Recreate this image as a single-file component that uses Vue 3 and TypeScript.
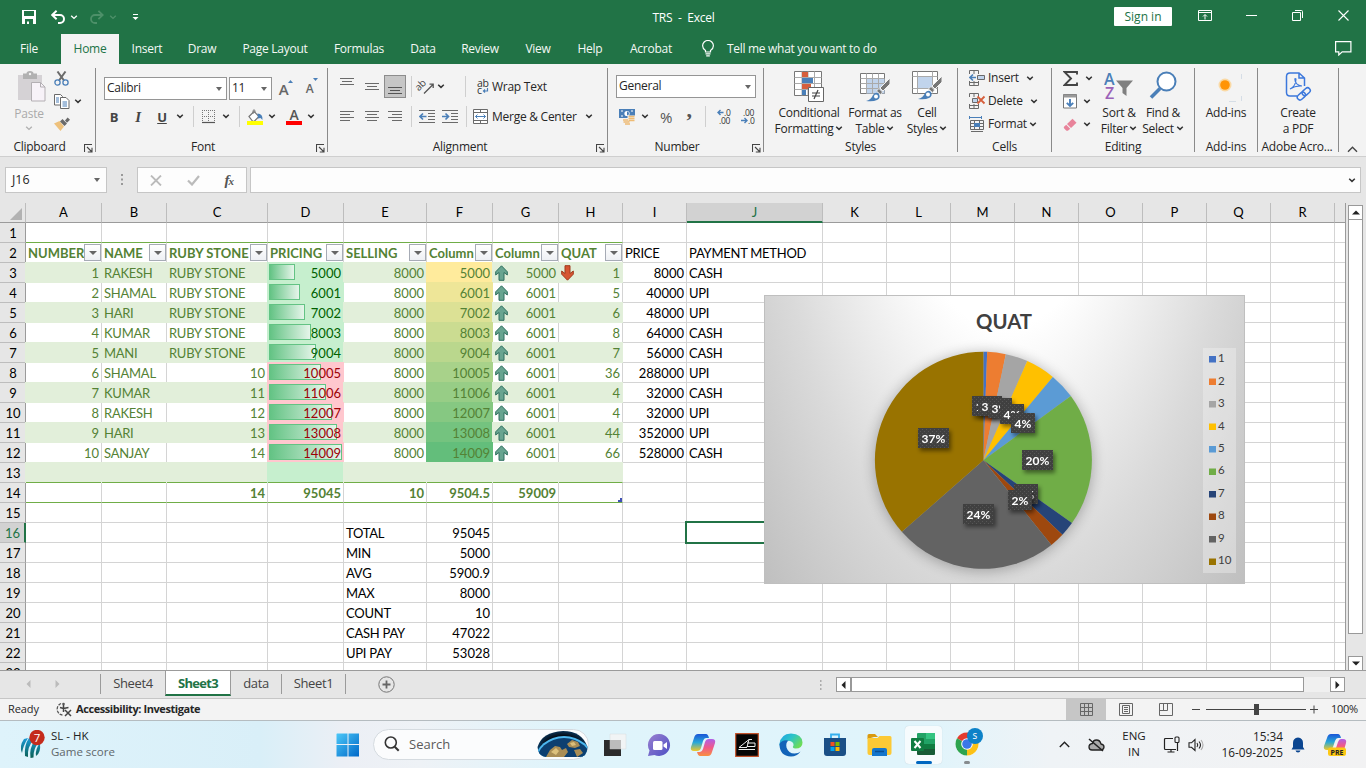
<script setup lang="ts">
import { h } from 'vue'

const Chev = () =>
  h('svg', { width: 8, height: 5, viewBox: '0 0 8 5' }, [
    h('path', { d: 'M1.2 .8 4 3.4 6.8 .8', fill: 'none', stroke: '#333', 'stroke-width': 1.5 }),
  ])
const Launch = () =>
  h('svg', { width: 9, height: 9, viewBox: '0 0 9 9' }, [
    h('path', { d: 'M.5 8V.5H8M3 3l4.5 4.5M8 3.8V8H3.8', fill: 'none', stroke: '#444', 'stroke-width': 1.1 }),
  ])

const tabs = ['File', 'Home', 'Insert', 'Draw', 'Page Layout', 'Formulas', 'Data', 'Review', 'View', 'Help', 'Acrobat']
const letters = 'ABCDEFGHIJKLMNOPQR'.split('').concat('')

interface Cell {
  t?: string
  cls: string[]
  bar?: number
  icon?: 'up' | 'down'
  filter?: boolean
  bg?: string
}

const names = ['RAKESH', 'SHAMAL', 'HARI', 'KUMAR', 'MANI', 'SHAMAL', 'KUMAR', 'RAKESH', 'HARI', 'SANJAY']
const pricing = [5000, 6001, 7002, 8003, 9004, 10005, 11006, 12007, 13008, 14009]
const quat = [1, 5, 6, 8, 7, 36, 4, 4, 44, 66]
const price = [8000, 40000, 48000, 64000, 56000, 288000, 32000, 32000, 352000, 528000]
const pay = ['CASH', 'UPI', 'UPI', 'CASH', 'CASH', 'UPI', 'CASH', 'UPI', 'UPI', 'CASH']
const heads = ['NUMBER', 'NAME', 'RUBY STONE', 'PRICING', 'SELLING', 'Column', 'Column', 'QUAT', 'PRICE', 'PAYMENT METHOD']
const totals = ['', '', '14', '95045', '10', '9504.5', '59009', '']
const summary = [['TOTAL', '95045'], ['MIN', '5000'], ['AVG', '5900.9'], ['MAX', '8000'], ['COUNT', '10'], ['CASH PAY', '47022'], ['UPI PAY', '53028']]

function scale(t: number): string {
  const a = [255, 235, 156]
  const b = [99, 190, 123]
  return `rgb(${a.map((v, i) => Math.round(v + (b[i] - v) * t)).join(',')})`
}

function makeCell(r: number, c: number): Cell {
  const cell: Cell = { cls: [] }
  const inTable = c < 8
  if (inTable && (r === 1 || r === 2 || r === 13 || r === 14)) cell.cls.push('gline')
  if (inTable && r >= 3 && r <= 12) cell.cls.push('noline')
  if (r === 2 && c < 10) {
    cell.t = heads[c]
    if (inTable) {
      cell.cls.push('head')
      cell.filter = true
    }
  }
  if (r >= 3 && r <= 13 && inTable) {
    cell.cls.push('body')
    if (r % 2 === 1) cell.bg = '#e2efda'
    if (c === 3) cell.bg = r >= 8 && r <= 12 ? '#ffc7ce' : '#c6efce'
  }
  if (r >= 3 && r <= 12) {
    const i = r - 3
    if (c === 5) cell.bg = scale(i / 9)
    if (c === 3) {
      cell.bar = Math.round((73 * pricing[i]) / 14009)
      cell.cls.push(i < 5 ? 'good' : 'bad')
    }
    if (c === 6) cell.icon = 'up'
    if (c === 7 && i === 0) cell.icon = 'down'
    const vals = [String(i + 1), names[i], i < 5 ? 'RUBY STONE' : String(i + 5), String(pricing[i]), '8000', String(pricing[i]), i ? '6001' : '5000', String(quat[i]), String(price[i]), pay[i]]
    if (c < 10) cell.t = vals[c]
    if (c < 10 && c !== 1 && c !== 9 && !(c === 2 && i < 5)) cell.cls.push('num')
  }
  if (r === 14 && inTable) {
    cell.t = totals[c]
    cell.cls.push('num', 'head')
  }
  if (r >= 16 && r <= 22) {
    if (c === 4) cell.t = summary[r - 16][0]
    if (c === 5) {
      cell.t = summary[r - 16][1]
      cell.cls.push('num')
    }
  }
  if (cell.bg) cell.cls.push('fill')
  return cell
}

const rows = Array.from({ length: 23 }, (_, i) => ({
  n: i + 1,
  cells: Array.from({ length: 19 }, (_, c) => makeCell(i + 1, c)),
}))

const pieColors = ['#4472c4', '#ed7d31', '#a5a5a5', '#ffc000', '#5b9bd5', '#70ad47', '#264478', '#9e480e', '#636363', '#997300']
const total = quat.reduce((a, b) => a + b, 0)
let acc = 0
const slices = quat.map((v, i) => {
  const pt = (f: number) => {
    const a = f * Math.PI * 2
    return `${(219.4 + 108.5 * Math.sin(a)).toFixed(2)} ${(165.3 - 108.5 * Math.cos(a)).toFixed(2)}`
  }
  const s = acc / total
  acc += v
  const e = acc / total
  return { d: `M219.4 165.3L${pt(s)}A108.5 108.5 0 0 1 ${pt(e)}Z`, fill: pieColors[i] }
})
const pieLabels = [
  { x: 208, y: 101, w: 24, t: '1%' },
  { x: 214, y: 101, w: 24, t: '3%' },
  { x: 224, y: 103, w: 24, t: '3%' },
  { x: 236, y: 109, w: 24, t: '4%' },
  { x: 247, y: 118, w: 24, t: '4%' },
  { x: 258, y: 155, w: 31, t: '20%' },
  { x: 250, y: 189, w: 24, t: '2%' },
  { x: 244, y: 195, w: 24, t: '2%' },
  { x: 199, y: 209, w: 31, t: '24%' },
  { x: 154, y: 133, w: 31, t: '37%' },
]
</script>

<template>
  <div class="app">
    <header class="title">
      <div class="qat">
        <svg width="14" height="14" viewBox="0 0 14 14"><path d="M0 0h14v14H0zM2 1v5h10V1zM3 9v5h8V9z" fill="#fff" fill-rule="evenodd" /><path d="M5 11.5h2V14H5z" fill="#fff" /></svg>
        <svg width="15" height="14" viewBox="0 0 15 14"><path d="M1 5h8a4 4 0 0 1 0 8H7M5.6 .8 1.2 5l4.4 4.2" fill="none" stroke="#fff" stroke-width="2" /></svg>
        <svg width="8" height="5" viewBox="0 0 8 5"><path d="M1.2 .8 4 3.4 6.8 .8" fill="none" stroke="#fff" stroke-width="1.4" /></svg>
        <svg width="15" height="14" viewBox="0 0 15 14"><path d="M14 5H6a4 4 0 0 0 0 8h2M9.4 .8 13.8 5 9.4 9.2" fill="none" stroke="#4d9069" stroke-width="1.8" /></svg>
        <svg width="8" height="5" viewBox="0 0 8 5"><path d="M1.2 .8 4 3.4 6.8 .8" fill="none" stroke="#4d9069" stroke-width="1.4" /></svg>
        <svg width="7" height="7" viewBox="0 0 7 7"><path d="M1 .5h5" stroke="#fff" /><path d="M.5 3h6L3.500 6z" fill="#fff" /></svg>
      </div>
      <div class="doc">TRS&nbsp; -&nbsp; Excel</div>
      <div class="signin">Sign in</div>
      <div class="wins">
        <svg width="14" height="11" viewBox="0 0 14 11"><path d="M.5 .5h13v10H.5zM.5 2.5h13M7 9.5V4.8M5 6.5l2-2 2 2" fill="none" stroke="#fff" /></svg>
        <svg width="11" height="11" viewBox="0 0 11 11"><path d="M0 5.5h11" stroke="#fff" /></svg>
        <svg width="11" height="11" viewBox="0 0 11 11"><path d="M.5 2.5h8v8h-8zM3 .5h6.500q1 0 1 1V8" fill="none" stroke="#fff" /></svg>
        <svg width="11" height="11" viewBox="0 0 11 11"><path d="M.5 .5l10 10M10.5 .5l-10 10" stroke="#fff" stroke-width="1.1" /></svg>
      </div>
    </header>
    <nav class="tabs">
      <span v-for="t in tabs" :key="t" :class="{ on: t === 'Home' }">{{ t }}</span>
      <svg class="bulb" width="12" height="17" viewBox="0 0 12 17"><path d="M3.5 12V10.5Q.6 8.6 .6 5.8a5.4 5.3 0 0 1 10.8 0Q11.4 8.6 8.5 10.5V12zM3.5 13.8h5M4.2 15.8h3.6" fill="none" stroke="#fff" stroke-width="1.2" /></svg>
      <span class="tell">Tell me what you want to do</span>
      <svg class="comment" width="17" height="15" viewBox="0 0 17 15"><path d="M.6 .6h15.3v10.300H7.200L3.800 14v-3.100H.6z" fill="none" stroke="#fff" stroke-width="1.2" /></svg>
    </nav>

    <section class="ribbon">
      <div class="grp g-clip">
        <div class="gbody">
          <div class="paste">
            <svg width="29" height="32" viewBox="0 0 29 32"><path d="M1 4h24v25H1z" fill="#d5d2d5" /><path d="M6 2.5h3.5a3.5 2.5 0 0 1 7 0H20V8H6z" fill="#b1b1b1" /><circle cx="13" cy="3" r="1.2" fill="#f3f3f3" /><path d="M14.5 11.5h9l4.5 4.5v14H14.5z" fill="#f7f2f8" stroke="#b3afb3" /><path d="M23.5 11.5V16H28" fill="none" stroke="#b3afb3" /></svg>
            <span>Paste</span>
            <svg width="8" height="5" viewBox="0 0 8 5"><path d="M1.2 .8 4 3.4 6.8 .8" fill="none" stroke="#b0b0b0" stroke-width="1.4" /></svg>
          </div>
          <div class="clipcol">
            <svg width="15" height="15" viewBox="0 0 15 15"><path d="M3.5 .5 10 9.5M11.5 .5 5 9.5" stroke="#6a6a6a" stroke-width="2" /><circle cx="3.5" cy="11.5" r="2.6" fill="none" stroke="#4a7fb8" stroke-width="1.3" /><circle cx="11.5" cy="11.5" r="2.6" fill="none" stroke="#4a7fb8" stroke-width="1.3" /></svg>
            <div class="copy">
              <svg width="16" height="15" viewBox="0 0 16 15"><path d="M.5 .5h6l2 2v8.500h-8z" fill="#fff" stroke="#6a6a6a" /><path d="M6.5 3.5h5.500l3 3v8H6.500z" fill="#fff" stroke="#6a6a6a" /><path d="M2 4h3M2 6h3M2 8h3M8.500 8h4.500M8.500 10h4.500M8.500 12h4.500" stroke="#4a7fb8" /></svg>
              <Chev />
            </div>
            <svg width="16" height="14" viewBox="0 0 16 14"><path d="M0 6.500 5.500 4 10 9.500 6.500 14z" fill="#eec17c" /><path d="M6 4.500 8.500 2l4.500 4.500L10.500 9zM11 3.500l2.600-3L16 2.800l-3 3z" fill="#6a6a6a" /></svg>
          </div>
        </div>
        <div class="glabel"><span>Clipboard</span><Launch /></div>
      </div>

      <div class="grp g-font">
        <div class="gbody col">
          <div class="row f1">
            <div class="box"><span>Calibri</span><i class="tri"></i></div>
            <div class="box"><span>11</span><i class="tri"></i></div>
            <div class="grow"><b>A</b><svg width="5" height="3" viewBox="0 0 5 3"><path d="M0 3 2.500 0 5 3z" fill="#4a7fb8" /></svg></div>
            <div class="grow small"><b>A</b><svg width="5" height="3" viewBox="0 0 5 3"><path d="M0 0 2.500 3 5 0z" fill="#4a7fb8" /></svg></div>
          </div>
          <div class="row f2">
            <b class="fb">B</b><i class="fi">I</i><u class="fb">U</u><Chev /><i class="sep"></i>
            <svg width="14" height="14" viewBox="0 0 14 14"><path d="M.5 0v13M6.500 0v13M12.500 0v13M0 .5h13M0 6.500h13" stroke="#777" stroke-dasharray="1 1" fill="none" /><path d="M0 12.500h13" stroke="#555" stroke-width="1.2" /></svg>
            <Chev /><i class="sep"></i>
            <svg width="17" height="16" viewBox="0 0 17 16"><path d="M2 7.500 7 2.500l5 5-4.500 4.500q-1 .5-2 0z" fill="#fff" stroke="#777" stroke-width="1.2" /><path d="M6 5V1.500q1-1.500 2 0V4" fill="none" stroke="#777" /><path d="M10.500 4.500q5.500 0 5 6.500l-2-2-2.500 .5z" fill="#4a7fb8" /><path d="M0 12h16v4H0z" fill="#ff0" /></svg>
            <Chev /><i></i>
            <div class="fcol">A</div>
            <Chev />
          </div>
        </div>
        <div class="glabel"><span>Font</span><Launch /></div>
      </div>

      <div class="grp g-align">
        <div class="gbody col">
          <div class="row a1">
            <svg width="15" height="9" viewBox="0 0 15 9"><path d="M0 .5h14M2 3.500h10M0 6.500h14" stroke="#6a6a6a" /></svg>
            <svg width="15" height="9" viewBox="0 0 15 9"><path d="M0 1.500h14M2 4.500h10M0 7.500h14" stroke="#6a6a6a" /></svg>
            <div class="sel"><svg width="15" height="9" viewBox="0 0 15 9"><path d="M0 1.500h14M2 4.500h10M0 7.500h14" stroke="#555" /></svg></div>
            <i class="sep"></i>
            <svg class="orient" width="17" height="15" viewBox="0 0 17 15"><text x="-1.5" y="9" transform="rotate(-45 4 8)" font-family="Open Sans, sans-serif" font-size="10" fill="#444">ab</text><path d="M6 14.500 15 5.500M15.200 9V5.200h-3.700" fill="none" stroke="#555" stroke-width="1.3" /></svg>
            <Chev /><i class="sep long"></i>
            <svg class="orient" width="15" height="16" viewBox="0 0 15 16"><text x="1" y="8" font-family="Open Sans, sans-serif" font-size="10.5" fill="#333">ab</text><text x="1" y="15" font-family="Open Sans, sans-serif" font-size="10.5" fill="#333">c</text><path d="M11.500 9v3H7.500M9 10.500 7.500 12 9 13.500" fill="none" stroke="#4a7fb8" stroke-width="1.2" /></svg>
            <span class="lt">Wrap Text</span>
          </div>
          <div class="row a2">
            <svg width="15" height="13" viewBox="0 0 15 13"><path d="M0 1.500h14M0 4.500h10M0 7.500h14M0 10.500h10" stroke="#6a6a6a" /></svg>
            <svg width="15" height="13" viewBox="0 0 15 13"><path d="M0 1.500h14M2 4.500h10M0 7.500h14M2 10.500h10" stroke="#6a6a6a" /></svg>
            <svg width="15" height="13" viewBox="0 0 15 13"><path d="M0 1.500h14M4 4.500h10M0 7.500h14M4 10.500h10" stroke="#6a6a6a" /></svg>
            <i class="sep"></i>
            <svg width="16" height="13" viewBox="0 0 16 13"><path d="M0 .5h16M9 3.500h7M9 6.500h7M9 9.500h7M0 12.500h16" stroke="#6a6a6a" /><path d="M7.500 6.500H1M4 3.500l-3 3 3 3" fill="none" stroke="#4a7fb8" stroke-width="1.7" /></svg>
            <svg width="16" height="13" viewBox="0 0 16 13"><path d="M0 .5h16M9 3.500h7M9 6.500h7M9 9.500h7M0 12.500h16" stroke="#6a6a6a" /><path d="M0 6.500h6.500M3.500 3.500l3 3-3 3" fill="none" stroke="#4a7fb8" stroke-width="1.7" /></svg>
            <i class="sep"></i>
            <svg width="16" height="15" viewBox="0 0 16 15"><path d="M.5 .5h14v14H.5zM.5 3.500h14M.5 11.500h14M7.500 .5v3M7.500 11.500v3" fill="#fff" stroke="#6a6a6a" /><path d="M2.500 7.500h10M4.500 5.500l-2 2 2 2M10.500 5.500l2 2-2 2" fill="none" stroke="#4a7fb8" /></svg>
            <span class="lt">Merge &amp; Center</span><Chev />
          </div>
        </div>
        <div class="glabel"><span>Alignment</span><Launch /></div>
      </div>

      <div class="grp g-num">
        <div class="gbody col">
          <div class="row n1"><div class="box"><span>General</span><i class="tri"></i></div></div>
          <div class="row n2">
            <svg width="17" height="17" viewBox="0 0 17 17"><path d="M0 1h16v9H0z" fill="#4a7fb8" /><path d="M2 3h2M2 8h2M12 3h2" stroke="#fff" /><circle cx="8" cy="5.500" r="2.6" fill="#fff" /><path d="M8 3.500a2 2 0 0 1 0 4z" fill="#4a7fb8" /><path d="M8.500 7.500h8V14h-4v3H3.500v-6h5z" fill="#f3f3f3" /><path d="M9.500 8.500h6M9.500 10.500h6M9.500 12.500h6M4 12h5M4.500 14h6M6 16h5" stroke="#eebb74" stroke-width="1.5" /></svg>
            <Chev /><span class="pct">%</span><span class="comma">,</span><i class="sep"></i>
            <svg class="orient" width="16" height="15" viewBox="0 0 16 15"><path d="M6.500 3.500H1M3.500 1 1 3.500 3.500 6" fill="none" stroke="#4a7fb8" stroke-width="1.4" /><text x="7" y="7" font-family="Open Sans, sans-serif" font-size="8.5" fill="#333">.0</text><text x="2" y="14.5" font-family="Open Sans, sans-serif" font-size="8.5" fill="#333">.00</text></svg>
            <svg class="orient" width="16" height="15" viewBox="0 0 16 15"><text x="2" y="7" font-family="Open Sans, sans-serif" font-size="8.5" fill="#333">.00</text><path d="M0 11.500h6M3.500 9 6 11.500 3.500 14" fill="none" stroke="#4a7fb8" stroke-width="1.4" /><text x="7" y="14.5" font-family="Open Sans, sans-serif" font-size="8.5" fill="#333">.0</text></svg>
          </div>
        </div>
        <div class="glabel"><span>Number</span><Launch /></div>
      </div>

      <div class="grp g-styles">
        <div class="gbody bigs">
          <div class="big">
            <svg width="30" height="31" viewBox="0 0 30 31"><path d="M.5 .5h27v24H.5z" fill="#fff" stroke="#777" /><path d="M.5 6.500h27M.5 12.500h27M.5 18.500h27M8 .5v24M14 .5v24M20.500 .5v24" stroke="#aaa" /><path d="M8 1h6v5H8zM8 13h9v5H8z" fill="#d65f3c" /><path d="M8 7h11v5H8zM8 19h4v5H8z" fill="#4a7fb8" /><path d="M14.500 16.500h15v14h-15z" fill="#fff" stroke="#666" /><path d="M18 22h8M18 25h8M24 19l-4 9" stroke="#444" stroke-width="1.2" /></svg>
            <span>Conditional</span><span>Formatting <Chev /></span>
          </div>
          <div class="big">
            <svg width="30" height="31" viewBox="0 0 30 31"><path d="M.5 2.500h24v20H.5z" fill="#fff" stroke="#777" /><path d="M6.500 8h18v14.500h-18z" fill="#c1d4ec" /><path d="M.5 7.500h24M.5 12.500h24M.5 17.500h24M6.500 2.500v20M12.500 2.500v20M18.500 2.500v20" stroke="#aaa" /><path d="M30 7v6l-7 7-3-3z" fill="#777" stroke="#f3f3f3" /><path d="M19 17.500l3.500 3.500-2 2.500-4-3.500z" fill="#777" stroke="#f3f3f3" stroke-width=".8" /><path d="M6 30q5-1 7-6 3-4 6-1 2 4-2 6-4 2-11 1z" fill="#4a7fb8" /><circle cx="16" cy="25.500" r="2" fill="#fff" /></svg>
            <span>Format as</span><span>Table <Chev /></span>
          </div>
          <div class="big">
            <svg width="30" height="31" viewBox="0 0 30 31"><path d="M.5 .5h25v22H.5z" fill="#fff" stroke="#777" /><path d="M5.500 5.500h15v12h-15z" fill="#c1d4ec" /><path d="M.5 5.500h25M.5 17.500h25M5.500 .5v22M20.500 .5v22" stroke="#aaa" /><path d="M30 5v6l-7 7-3-3z" fill="#777" stroke="#f3f3f3" /><path d="M19 15.500l3.500 3.500-2 2.500-4-3.500z" fill="#777" stroke="#f3f3f3" stroke-width=".8" /><path d="M6 28q5-1 7-6 3-4 6-1 2 4-2 6-4 2-11 1z" fill="#4a7fb8" /><circle cx="16" cy="23.500" r="2" fill="#fff" /></svg>
            <span>Cell</span><span>Styles <Chev /></span>
          </div>
        </div>
        <div class="glabel"><span>Styles</span></div>
      </div>

      <div class="grp g-cells">
        <div class="gbody list">
          <div><svg width="17" height="16" viewBox="0 0 17 16"><path d="M.5 4V.5h9V4M5 .5V4M.5 11v4.500h9V11M5 11v4.500M.5 12.500h9" fill="none" stroke="#6a6a6a" /><path d="M8.500 5.500h7v4h-7z" fill="#c1d4ec" stroke="#6a6a6a" /><path d="M7 7.500H1M4 4.500l-3 3 3 3" fill="none" stroke="#4a7fb8" stroke-width="1.6" /></svg><span>Insert</span><Chev class="c1" /></div>
          <div><svg width="17" height="16" viewBox="0 0 17 16"><path d="M.5 4V.5h9V4M5 .5V4M.5 11v4.500h9V11M5 11v4.500M.5 12.500h9" fill="none" stroke="#6a6a6a" /><path d="M3.500 5.500h5v4h-5z" fill="#c1d4ec" stroke="#6a6a6a" /><path d="M8.500 3.500l7 7M15.500 3.500l-7 7" stroke="#d65f3c" stroke-width="1.8" /></svg><span>Delete</span><Chev class="c2" /></div>
          <div><svg width="17" height="16" viewBox="0 0 17 16"><path d="M1.500 4.500h13v9h-13zM1.500 7.500h13M1.500 10.500h13M5.500 4.500v9M10.500 4.500v9M2 15.500h12" fill="none" stroke="#6a6a6a" /><path d="M5 7h6v4H5z" fill="#4a7fb8" /><path d="M.5 0v3M12.500 0v3M.5 1.500h12" stroke="#4a7fb8" fill="none" /></svg><span>Format</span><Chev class="c3" /></div>
        </div>
        <div class="glabel"><span>Cells</span></div>
      </div>

      <div class="grp g-edit">
        <div class="gbody">
          <div class="elist">
            <div><svg width="15" height="15" viewBox="0 0 15 15"><path d="M14 3.500V1H1.500L8 7.500 1.500 14H14v-2.500" fill="none" stroke="#444" stroke-width="1.9" /></svg><Chev class="e1" /></div>
            <div><svg width="15" height="15" viewBox="0 0 15 15"><path d="M.5 .5h13v13.500H.5z" fill="#fff" stroke="#777" /><path d="M.5 .5h13v3H.5z" fill="#999" /><path d="M7 5v7M3.800 8.800 7 12l3.200-3.200" fill="none" stroke="#4a7fb8" stroke-width="1.9" /></svg><Chev /></div>
            <div><svg width="15" height="14" viewBox="0 0 15 14"><path d="M4 6 9.500 .8l4 4L8 10z" fill="#e8839a" /><path d="M3.200 6.800l4 4-2 1.700q-1.200 .5-2 0L1 10.200q-.5-1 0-1.500z" fill="#e8839a" /></svg><Chev /></div>
          </div>
          <div class="big sort">
            <svg width="30" height="31" viewBox="0 0 30 31"><text x="0" y="13.5" font-family="Open Sans, sans-serif" font-weight="600" font-size="16" fill="#4a7fb8">A</text><text x="1" y="28" font-family="Open Sans, sans-serif" font-weight="600" font-size="16" fill="#9a62b8">Z</text><path d="M12 9.500h17L22.500 17v8l-4-3v-5z" fill="#808080" /></svg>
            <span>Sort &amp;</span><span>Filter <Chev /></span>
          </div>
          <div class="big find">
            <svg width="28" height="31" viewBox="0 0 28 31"><circle cx="17.5" cy="10.5" r="9" fill="#fff" stroke="#4a7fb8" stroke-width="2" /><path d="M11 17.500 2 26.500" stroke="#4a7fb8" stroke-width="3.5" /></svg>
            <span>Find &amp;</span><span>Select <Chev /></span>
          </div>
        </div>
        <div class="glabel"><span>Editing</span></div>
      </div>

      <div class="grp g-add">
        <div class="gbody"><div class="big"><svg width="44" height="31" viewBox="0 0 44 31"><circle cx="21" cy="14" r="6.5" fill="#ffc870" opacity=".6" /><circle cx="21" cy="14" r="4.8" fill="#ff9406" /><path d="M37.500 3v5M37.500 25v5M25 30.500h7" stroke="#d5dde6" /></svg><span>Add-ins</span></div></div>
        <div class="glabel"><span>Add-ins</span></div>
      </div>
      <div class="grp g-pdf">
        <div class="gbody"><div class="big"><svg width="27" height="31" viewBox="0 0 27 31"><path d="M12 25H5q-3.500 0-3.500-3.500v-16Q1.500 2 5 2h9l5.500 5v8M14 2v5h5.500" fill="none" stroke="#3c78dc" stroke-width="1.5" /><path d="M5 18q6-3 6-10-1-1-1.200 0Q10 14 17 15q-7-.5-12 3z" fill="none" stroke="#3c78dc" stroke-width="1.1" /><g fill="none" stroke="#3c78dc" stroke-width="1.5" transform="rotate(-42 19 22)"><rect x="10.5" y="19.8" width="9" height="5.4" rx="2.7" /><rect x="17" y="19.8" width="9" height="5.4" rx="2.7" /></g></svg><span>Create</span><span>a PDF</span></div></div>
        <div class="glabel"><span>Adobe Acro...</span></div>
      </div>
      <svg class="collapse" width="11" height="7" viewBox="0 0 11 7"><path d="M1 5.800 5.500 1.300 10 5.800" fill="none" stroke="#444" stroke-width="1.4" /></svg>
    </section>

    <section class="fbar">
      <div class="fbox nb"><span>J16</span><i class="tri"></i></div>
      <svg class="dots" width="3" height="12" viewBox="0 0 3 12"><path d="M0 1h2M0 5.500h2M0 10h2" stroke="#999" stroke-width="2" /></svg>
      <div class="fbox fx">
        <svg width="12" height="11" viewBox="0 0 12 11"><path d="M1 .5l10 10M11 .5l-10 10" stroke="#bbb" stroke-width="1.8" /></svg>
        <svg width="13" height="11" viewBox="0 0 13 11"><path d="M1 5.500l4 4L12 1" fill="none" stroke="#bbb" stroke-width="2.2" /></svg>
        <span class="fxt">f<small>x</small></span>
      </div>
      <div class="fbox inp"><Chev /></div>
    </section>

    <main class="sheet">
      <div class="grid">
        <div class="ghead">
          <div class="corner"><svg width="13" height="12" viewBox="0 0 13 12"><path d="M12 0v12H0z" fill="#b2b2b2" /></svg></div>
          <div v-for="(l, i) in letters" :key="i" class="ch" :class="{ cur: l === 'J' }">{{ l }}</div>
        </div>
        <div v-for="r in rows" :key="r.n" class="gr">
          <div class="rh" :class="{ cur: r.n === 16 }">{{ r.n }}</div>
          <div v-for="(c, i) in r.cells" :key="i" class="cell" :class="c.cls" :style="c.bg ? { '--bg': c.bg } : undefined">
            <i v-if="c.bar" class="bar" :style="{ width: c.bar + 'px' }"></i>
            <svg v-if="c.icon" class="arrow" :class="c.icon" width="13" height="16" viewBox="0 0 13 16"><path d="M6.500 .8 12.300 6.800V10L9 7.500V15.300H4V7.500L.7 10V6.800z" :fill="c.icon === 'up' ? '#68a490' : '#d65532'" :stroke="c.icon === 'up' ? '#2f6f5e' : '#a03a1d'" /></svg>
            <span>{{ c.t }}</span>
            <i v-if="c.filter" class="flt"><i class="tri"></i></i>
            <i v-if="r.n === 14 && i === 7" class="handle"></i>
            <i v-if="r.n === 16 && i === 9" class="cursor"></i>
          </div>
        </div>
        <svg class="chart" width="481" height="289" viewBox="0 0 481 289">
          <defs>
            <radialGradient id="cbg" gradientUnits="userSpaceOnUse" cx="0" cy="0" r="1" gradientTransform="translate(240.5 -231) scale(340 735)">
              <stop offset=".36" stop-color="#fff" /><stop offset=".7" stop-color="#dadada" /><stop offset="1" stop-color="#bfbfbf" />
            </radialGradient>
            <pattern id="dots" width="4" height="4" patternUnits="userSpaceOnUse"><path d="M0 0h4v4H0z" fill="#404040" /><path d="M0 0h1v1H0zM2 2h1v1H2z" fill="#565656" /></pattern>
            <filter id="sh1" x="-20%" y="-20%" width="140%" height="140%"><feGaussianBlur stdDeviation="7" /></filter>
            <filter id="sh2" x="-40%" y="-40%" width="200%" height="200%"><feDropShadow dx="2" dy="3" stdDeviation="2" flood-opacity=".45" /></filter>
          </defs>
          <rect x=".5" y=".5" width="480" height="288" fill="url(#cbg)" stroke="#bfbfbf" />
          <text x="240" y="34" text-anchor="middle" font-size="21.5" font-weight="700" fill="#404040" textLength="56" lengthAdjust="spacingAndGlyphs">QUAT</text>
          <circle cx="219.4" cy="167" r="109" opacity=".28" filter="url(#sh1)" />
          <path v-for="(s, i) in slices" :key="i" :d="s.d" :fill="s.fill" />
          <g v-for="(l, i) in pieLabels" :key="'l' + i" filter="url(#sh2)">
            <rect :x="l.x" :y="l.y" :width="l.w" height="20" fill="url(#dots)" />
            <text :x="l.x + l.w / 2" :y="l.y + 14.5" text-anchor="middle" font-size="12" font-weight="700" fill="#fff">{{ l.t }}</text>
          </g>
          <rect x="439" y="53" width="33" height="225" fill="#f2f2f2" opacity=".4" />
          <g v-for="(c, i) in pieColors" :key="'k' + i">
            <rect x="445" :y="61 + i * 22.5" width="7" height="6.5" :fill="c" />
            <text x="454" :y="67.3 + i * 22.4" font-size="11.5" fill="#404040">{{ i + 1 }}</text>
          </g>
        </svg>
      </div>
      <div class="vscroll">
        <div class="sbtn"><svg width="8" height="5" viewBox="0 0 8 5"><path d="M0 4.500 4 .5l4 4z" fill="#222" /></svg></div>
        <div class="vthumb"></div>
        <div class="vspace"></div>
        <div class="sbtn"><svg width="8" height="5" viewBox="0 0 8 5"><path d="M0 .5 4 4.500l4-4z" fill="#222" /></svg></div>
      </div>
    </main>

    <section class="stabs">
      <div class="nav"><svg width="5" height="8" viewBox="0 0 5 8"><path d="M4.500 0v8L.5 4z" fill="#bbb" /></svg><svg width="5" height="8" viewBox="0 0 5 8"><path d="M.5 0v8l4-4z" fill="#bbb" /></svg></div>
      <i class="tsep"></i><span class="s4">Sheet4</span><b class="act">Sheet3</b><span class="sd">data</span><i class="tsep"></i><span class="s1">Sheet1</span><i class="tsep"></i>
      <svg class="plus" width="17" height="17" viewBox="0 0 17 17"><circle cx="8.5" cy="8.5" r="7.7" fill="none" stroke="#777" /><path d="M8.500 4.500v8M4.500 8.500h8" stroke="#666" stroke-width="1.8" /></svg>
      <svg class="hdots" width="2" height="10" viewBox="0 0 2 10"><path d="M0 1h1.500M0 5h1.500M0 9h1.500" stroke="#999" stroke-width="1.5" /></svg>
      <div class="hscroll">
        <div class="hb"><svg width="5" height="8" viewBox="0 0 5 8"><path d="M4.500 0v8L.5 4z" fill="#222" /></svg></div>
        <div class="ht"></div><div class="hs"></div>
        <div class="hb"><svg width="5" height="8" viewBox="0 0 5 8"><path d="M.5 0v8l4-4z" fill="#222" /></svg></div>
      </div>
    </section>

    <section class="status">
      <span class="ready">Ready</span>
      <svg class="acc" width="17" height="15" viewBox="0 0 17 15"><path d="M5 1.500A6 6 0 0 0 1.500 9Q3 13 7 13" fill="none" stroke="#555" stroke-width="1.3" stroke-dasharray="3 1.2" /><circle cx="7.5" cy="2" r="1.3" fill="#555" /><path d="M4 5.500l3.500 1 5-1M7.500 3v7M9 8l6 6M15 8l-6 6" fill="none" stroke="#444" stroke-width="1.5" /></svg>
      <b>Accessibility: Investigate</b>
      <div class="views">
        <div class="von"><svg width="13" height="13" viewBox="0 0 13 13"><path d="M.5 .5h12v12H.5zM.5 4.500h12M.5 8.500h12M4.500 .5v12M8.500 .5v12" fill="none" stroke="#666" /></svg></div>
        <div><svg width="14" height="13" viewBox="0 0 14 13"><path d="M.5 .5h13v12H.5zM3.500 2.500h7v8h-7zM5 4.500h4M5 6.500h4M5 8.500h4" fill="none" stroke="#666" /></svg></div>
        <div><svg width="14" height="13" viewBox="0 0 14 13"><path d="M.5 .5h13v12H.5zM4.500 .5v7M8.500 .5v7M.5 7.500h8" fill="none" stroke="#666" /></svg></div>
      </div>
      <svg class="zoom" width="124" height="12" viewBox="0 0 124 12"><path d="M0 6.500h8M14 6.500h100M118 6.500h8M122 2.500v8" stroke="#444" /><path d="M62 1h5v11h-5z" fill="#444" /></svg>
      <span class="pc">100%</span>
    </section>

    <footer class="task">
      <div class="widget">
        <svg width="27" height="30" viewBox="0 0 27 30"><defs><linearGradient id="wg" x2="0" y2="1"><stop offset="0" stop-color="#1a9bd8" /><stop offset="1" stop-color="#0b5f52" /></linearGradient></defs><path d="M5 9Q0 16 3 23 4 16 9 8zM10 8Q5 15 6 26l3 1Q8 17 15 9zM16 10q-6 8-4.500 18l3-.5Q14 19 20 12zM21 13q-5 6-4 13 5-3 4-13z" fill="url(#wg)" /><circle cx="18" cy="7.5" r="7.7" fill="#c42b1c" /><text x="18" y="11.8" text-anchor="middle" font-family="Open Sans, sans-serif" font-size="11.5" fill="#fff">7</text></svg>
        <div><span>SL - HK</span><span class="dim">Game score</span></div>
      </div>
      <svg class="win" width="24" height="24" viewBox="0 0 24 24"><defs><linearGradient id="wn" x2="1" y2="1"><stop offset="0" stop-color="#4cc8f8" /><stop offset="1" stop-color="#0068c8" /></linearGradient></defs><path d="M1 .5h10.500V11H.5V1zM12.500 .5h10.500V11H12.500zM.5 12h11v11.500H.5zM12.500 12h10.500v11.500H12.500z" fill="url(#wn)" /></svg>
      <div class="search">
        <svg width="16" height="16" viewBox="0 0 16 16"><circle cx="6.8" cy="6.5" r="5.5" fill="none" stroke="#333" stroke-width="1.6" /><path d="M10.700 10.700l4 4" stroke="#333" stroke-width="2" /></svg>
        <span>Search</span>
        <svg width="51" height="28" viewBox="0 0 51 28"><defs><clipPath id="ec"><path d="M.5 17Q5 2 26 1q19 0 24.500 16Q50 27 42 27H9Q1 26 .5 17z" /></clipPath><radialGradient id="es"><stop offset=".6" stop-color="#050d18" /><stop offset="1" stop-color="#0b3b63" /></radialGradient></defs><g clip-path="url(#ec)"><path d="M0 0h51v28H0z" fill="url(#es)" /><ellipse cx="27" cy="31" rx="29" ry="25" fill="#4db8f0" /><ellipse cx="27" cy="33" rx="28" ry="25" fill="#0c3f70" /><path d="M9 27l4-7 5-4 5 1 2 3 4-2 2 4-4 5zM30 14l5-4 6 2 2 4-5 2-6-1zM37 20l6-1 3 4-6 4z" fill="#a98d55" /><path d="M14 22l5-4 3 3-3 4zM33 13l4-1 2 3-4 1z" fill="#dcc07c" /></g></svg>
      </div>
      <div class="apps">
        <svg width="24" height="24" viewBox="0 0 24 24"><path d="M1 7h17v16H1z" fill="#2b2b2b" /><path d="M7 1h16v15H7z" fill="#f5f5f5" opacity=".85" stroke="#d5d5d5" stroke-width=".5" /><path d="M7 7h11v9H7z" fill="#bcbcbc" /></svg>
        <svg width="24" height="24" viewBox="0 0 24 24"><defs><linearGradient id="ch" x2="1" y2="1"><stop offset="0" stop-color="#9a80d0" /><stop offset="1" stop-color="#4d4fc4" /></linearGradient></defs><path d="M12.500 1a11 11 0 1 1-5 21L1 23l1.500-5.500A11 11 0 0 1 12.500 1z" fill="url(#ch)" /><rect x="6" y="8" width="9.5" height="9" rx="1.5" fill="#fff" /><path d="M16.500 11.500l3.500-2.500v7l-3.500-2.500z" fill="#fff" /></svg>
        <svg width="26" height="24" viewBox="0 0 26 24"><defs><linearGradient id="ca" x2="0" y2="1"><stop offset="0" stop-color="#1a55d8" /><stop offset=".5" stop-color="#28a8d8" /><stop offset="1" stop-color="#f0c828" /></linearGradient><linearGradient id="cb" x2="0" y2="1"><stop offset="0" stop-color="#b060e8" /><stop offset=".5" stop-color="#f05a8a" /><stop offset="1" stop-color="#f89040" /></linearGradient></defs><path d="M8 1h8q2 0 3 4h-3q-2 0-3 3l-2 7q-1 3-4 3H4Q0 18 1 14L4 5q1-4 4-4z" fill="url(#ca)" /><path d="M18 23h-8q-2 0-3-4h3q2 0 3-3l2-7q1-3 4-3h3q4 0 3 4l-3 9q-1 4-4 4z" fill="url(#cb)" /></svg>
        <svg width="24" height="24" viewBox="0 0 24 24"><path d="M.7 .7h22.600v22.600H.7z" fill="#050505" stroke="#c4532c" stroke-width="1.2" /><path d="M3.500 16.500h16.500M4 14.500 14 6.500 12 14M4 14.500h8M12 10h8v3.500h-8M14 6.500h3" fill="none" stroke="#eee" stroke-width="1" /></svg>
        <svg width="24" height="24" viewBox="0 0 24 24"><defs><linearGradient id="ea" x2="1" y2=".6"><stop offset="0" stop-color="#1c9fe8" /><stop offset=".5" stop-color="#2cc4c8" /><stop offset="1" stop-color="#6cdc58" /></linearGradient></defs><path d="M.5 11Q1.500 1 12 .5q11 .5 11.500 9 0 6-7 6-4-.5-2-3Q15 9 11 8 3 7 .5 13z" fill="url(#ea)" /><path d="M.5 11Q3 6.500 9.500 7.500q-3 2-2 7 2 6 8 6 4 0 6-2Q18 23.500 12 23.500 .5 23 .5 11z" fill="#1263b8" /></svg>
        <svg width="24" height="24" viewBox="0 0 24 24"><path d="M8 5V1.500h8V5" fill="none" stroke="#35b0ee" stroke-width="1.8" /><path d="M1 5h22v15q0 3-3 3H4q-3 0-3-3z" fill="#1b4f86" /><path d="M7.500 9h4v4h-4z" fill="#f25022" /><path d="M12.500 9h4v4h-4z" fill="#7fba00" /><path d="M7.500 14h4v4h-4z" fill="#00a4ef" /><path d="M12.500 14h4v4h-4z" fill="#ffb900" /></svg>
        <svg width="25" height="24" viewBox="0 0 25 24"><path d="M.5 2.500q0-1.500 1.500-1.500h6l3 3h-4L.5 6z" fill="#d99a10" /><path d="M.5 5h10l2-2H23q1.500 0 1.500 1.500V20q0 2-2 2h-20q-2 0-2-2z" fill="#fcc935" /><path d="M5 23v-6q0-2 2-2h11q2 0 2 2v6z" fill="#1576cc" /><path d="M8 18.500h9" stroke="#0b4f94" stroke-width="1.5" /></svg>
        <div class="xl"><svg width="24" height="23" viewBox="0 0 24 23"><path d="M7 0h16q1 0 1 1v10H6V1q0-1 1-1z" fill="#21a366" /><path d="M15 0h8q1 0 1 1v5h-9z" fill="#33c481" /><path d="M6 11h9v6H6z" fill="#107c41" /><path d="M15 11h9v6h-9z" fill="#107c41" /><path d="M6 16h18v5q0 1-1 1H7q-1 0-1-1z" fill="#185c37" /><rect y="5" width="13" height="13" rx="1" fill="#107c41" /><path d="M3.500 8l6 7M9.500 8l-6 7" stroke="#fff" stroke-width="2" /></svg><i></i></div>
        <div class="cr"><svg width="26" height="30" viewBox="0 0 26 30"><circle cx="12" cy="17" r="11.5" fill="#fff" /><path d="M12 17 2 11.300A11.500 11.500 0 0 1 22 11.300L12 11.500z" fill="#e33b2e" /><path d="M12 17 22 11.300A11.500 11.500 0 0 1 12 28.500z" fill="#fbc116" /><path d="M12 17 12 28.500A11.500 11.500 0 0 1 2 11.300z" fill="#2da44f" /><circle cx="12" cy="17" r="5.8" fill="#fff" /><circle cx="12" cy="17" r="4.8" fill="#3b78e7" /></svg><em>s</em><i></i></div>
      </div>
      <div class="tray">
        <svg width="11" height="7" viewBox="0 0 11 7"><path d="M.8 6 5.500 1.300 10.200 6" fill="none" stroke="#222" stroke-width="1.4" /></svg>
        <svg width="17" height="14" viewBox="0 0 17 14"><path d="M4 12h9q3-.5 3-3t-3-3Q12 2 8.500 2 5 2 4.500 5.500 1 6 1 9t3 3z" fill="#aaa" stroke="#222" stroke-width="1.3" /><path d="M1 1l14 12" stroke="#222" stroke-width="1.6" /></svg>
        <div class="lang"><span>ENG</span><span>IN</span></div>
        <svg width="17" height="17" viewBox="0 0 17 17"><path d="M10 2.500H2.500q-1 0-1 1v9q0 1 1 1H13M4.500 16h7M8 13.500V16M14.500 7v8" fill="none" stroke="#222" stroke-width="1.2" /><rect x="12" y="1" width="4" height="5.5" rx="1" fill="none" stroke="#222" stroke-width="1.1" /></svg>
        <svg width="16" height="14" viewBox="0 0 16 14"><path d="M1 4.800h2.500L7 1.500v11L3.500 9.300H1z" fill="none" stroke="#222" stroke-width="1.1" /><path d="M9 5q1.500 2 0 4M11 3.500q3 3.500 0 7" fill="none" stroke="#222" stroke-width="1.1" /><path d="M13 2q4 5 0 10" fill="none" stroke="#aaa" stroke-width="1.1" /></svg>
        <div class="clock"><span>15:34</span><span>16-09-2025</span></div>
        <svg width="14" height="16" viewBox="0 0 14 16"><path d="M7 .5q5 .5 5 5.500v4l1.500 2.500H.5L2 10V6Q2 1 7 .5zM4.500 13.500h5Q9 15.500 7 15.500t-2.500-2z" fill="#0a4590" /></svg>
        <svg width="24" height="24" viewBox="0 0 24 24"><path d="M8 1h7q2 0 3 4h-3q-2 0-3 3l-2 6q-1 3-4 3H4Q0 17 1 13l3-8q1-4 4-4z" fill="url(#ca)" /><path d="M17 19h-7l3-4 2-6q1-3 3-3h2q4 0 3 4l-2 7z" fill="url(#cb)" /><rect x="5" y="14.5" width="18" height="8.5" rx="2.5" fill="#fdc814" /><text x="14" y="21.5" text-anchor="middle" font-family="Open Sans, sans-serif" font-weight="700" font-size="7" fill="#222">PRE</text></svg>
      </div>
    </footer>
  </div>
</template>

<style>
html, body { margin: 0; overflow: hidden; }
</style>

<style scoped>
.app { width: 1366px; height: 768px; overflow: hidden; display: flex; flex-direction: column; font: 12px/16px "Open Sans", sans-serif; letter-spacing: -0.26px; color: #262626; background: #e6e6e6; }
svg { display: block; flex: none; }
.title { height: 34px; background: #217346; display: grid; grid-template-columns: 500px 367px 247px 58px 194px; align-items: start; color: #fff; }
.qat { display: flex; align-items: center; padding: 10px 0 0 22px; height: 14px; }
.qat svg:nth-child(2) { margin-left: 15px; }
.qat svg:nth-child(3) { margin-left: 4px; }
.qat svg:nth-child(4) { margin-left: 11px; }
.qat svg:nth-child(5) { margin-left: 5px; }
.qat svg:nth-child(6) { margin-left: 15px; }
.doc { text-align: center; padding-top: 10px; }
.signin { grid-column: 4; background: #fff; color: #217346; height: 19px; line-height: 19px; margin-top: 7px; text-align: center; border-radius: 1px; letter-spacing: 0; }
.wins { display: grid; grid-template-columns: 66px 26px 66px 26px; padding-top: 10px; }
.wins svg { justify-self: center; }
.tabs { height: 30px; background: #217346; display: grid; grid-template-columns: 61px 58px 56px 54px 92px 76px 52px 62px 54px 50px 72px 40px 300px 1fr; color: #f4f8f5; text-align: center; line-height: 30px; }
.tabs span:first-child { padding-right: 3px; }
.tabs .on { background: #f3f3f3; color: #217346; }
.tabs .tell { text-align: left; letter-spacing: -.3px; }
.bulb { margin: 6px 0 0 15px; }
.comment { justify-self: end; margin: 7px 14px 0 0; }

.ribbon { height: 92px; background: #f3f3f3; border-bottom: 1px solid #cfcfcf; display: flex; }
.grp { position: relative; display: flex; flex-direction: column; box-sizing: border-box; border-right: 1px solid #8a8a8a; height: 84px; margin-top: 4px; flex: none; }
.gbody { height: 71px; display: flex; flex: none; }
.gbody.col { flex-direction: column; }
.glabel { text-align: center; line-height: 16px; height: 16px; position: relative; flex: none; }
.glabel span { display: inline-block; }
.glabel svg { position: absolute; right: 2px; top: 5px; }
.g-clip { width: 96px; }
.g-font { width: 232px; }
.g-align { width: 280px; }
.g-num { width: 156px; }
.g-styles { width: 194px; }
.g-cells { width: 94px; }
.g-edit { width: 143px; }
.g-add { width: 63px; }
.g-pdf { width: 81px; }
.g-clip .glabel { padding-right: 16px; }
.g-font .glabel, .g-num .glabel { padding-right: 17px; }
.g-align .glabel { padding-right: 15px; }
.g-pdf .glabel { padding-right: 2px; }
.paste { width: 50px; padding-left: 4px; display: flex; flex-direction: column; align-items: center; color: #aaa; }
.paste > svg:first-child { margin: 3px 0 3px 4px; }
.paste > svg:last-child { margin-top: 4px; }
.clipcol { display: flex; flex-direction: column; padding: 3px 0 0; gap: 8px; }
.copy { display: flex; align-items: center; gap: 4px; }
.row { display: grid; place-items: center; height: 23px; }
.gbody.col .row:first-child { margin-top: 7px; }
.gbody.col .row:last-child:not(:first-child) { margin-top: 7px; }
.f1 { grid-template-columns: 123px 43px 24px 24px; column-gap: 2px; margin-left: 8px; justify-content: start; }
.f2 { grid-template-columns: 24px 24px 24px 12px 14px 18px 16px 10px 22px 12px 4px 24px 10px; margin-left: 6px; justify-content: start; }
.a1 { grid-template-columns: 25px 24px 22px 10px 20px 10px 29px 16px auto; margin-left: 7px; justify-content: start; }
.a2 { grid-template-columns: 25px 24px 22px 10px 21px 25px 8px 21px 92px 12px; margin-left: 7px; justify-content: start; }
.n1 { grid-template-columns: 140px; margin-left: 8px; justify-content: start; }
.n2 { grid-template-columns: 23px 12px 30px 16px 16px 24px 24px; margin-left: 8px; justify-content: start; }
.a1 > svg:nth-child(1) { margin-top: -8px; }
.orient { overflow: visible; }
.lt { justify-self: start; padding-left: 1px; white-space: nowrap; }
.box { width: 100%; height: 23px; box-sizing: border-box; border: 1px solid #959595; background: #fff; display: flex; align-items: center; justify-content: space-between; padding: 0 4px 0 2px; }
.box span { padding-bottom: 2px; }
.tri { width: 0; height: 0; border: 3px solid transparent; border-top: 4px solid #666; border-bottom: 0; display: block; }
.sep { width: 1px; height: 21px; background: #cfcfcf; }
.long { margin-left: 9px; }
.sel { width: 20px; height: 21px; border: 1px solid #8c8c8c; background: #c6c6c6; display: flex; align-items: end; justify-content: center; }
.sel svg { margin-bottom: 2px; }
.grow { display: flex; align-items: flex-start; color: #666; }
.grow b { font-weight: 600; font-size: 15px; line-height: 24px; }
.grow.small b { font-size: 12px; line-height: 27px; }
.grow svg { margin-top: 3px; }
.fb, .fi { font-size: 13px; font-weight: 700; color: #444; }
.fi { font-family: "Liberation Serif", serif; font-size: 15px; }
.fcol { width: 16px; height: 16px; box-sizing: border-box; border-bottom: 4px solid #f00; font-size: 14px; font-weight: 600; line-height: 12px; text-align: center; color: #555; }
.pct { font-size: 15px; color: #555; }
.comma { font: bold 22px/10px "Liberation Serif", serif; color: #555; margin-top: -14px; }
.big { display: flex; flex-direction: column; align-items: center; white-space: nowrap; }
.big > svg { margin: 3px 0 3px; }
.big span { line-height: 16px; height: 16px; }
.big span svg { display: inline-block; vertical-align: 2px; margin-left: -1px; }
.bigs { display: grid; grid-template-columns: 90px 42px 62px; }
.list { flex-direction: column; padding: 2px 0 0 11px; gap: 7px; box-sizing: border-box; }
.list div { display: flex; align-items: center; height: 16px; }
.list span { margin-left: 2px; width: 33px; }
.c1 { margin-left: 5px; }
.c2 { margin-left: 9px; }
.c3 { margin-left: 8px; }
.elist { width: 47px; padding: 3px 0 0 11px; display: flex; flex-direction: column; gap: 8px; box-sizing: border-box; }
.elist div { display: flex; align-items: center; gap: 5px; height: 15px; }
.e1 { margin-left: 2px; }
.sort { width: 40px; }
.find { width: 46px; margin-left: 1px; }
.g-add .big, .g-pdf .big { width: 100%; }
.collapse { margin: 82px 0 0 8px; }

.fbar { height: 46px; background: #e6e6e6; display: flex; align-items: center; box-sizing: border-box; padding-left: 5px; }
.fbox { height: 26px; box-sizing: border-box; border: 1px solid #c6c6c6; background: #fdfdfd; display: flex; align-items: center; }
.nb { width: 102px; justify-content: space-between; padding: 0 6px; }
.nb span { font-size: 12.5px; letter-spacing: 0; }
.dots { margin: 0 13px 0 14px; }
.fx { width: 110px; padding: 0 13px 0 12px; justify-content: space-between; margin-right: 3px; }
.fxt { font: italic bold 15px "Liberation Serif", serif; color: #555; letter-spacing: -1px; }
.fxt small { font-size: 11px; }
.inp { width: 1111px; justify-content: end; padding-right: 4px; }

.sheet { height: 467px; display: flex; }
.grid { width: 1345px; height: 467px; overflow: hidden; position: relative; background: #fff; font: 13px/19px Lato, sans-serif; letter-spacing: 0; color: #000; }
.ghead, .gr { display: grid; grid-template-columns: 26px 76px 65px 101px 76px 83px 66px 66px 64px 64px 136px repeat(8, 64px) 64px; }
.ghead { height: 20px; background: #e6e6e6; }
.corner, .ch { box-sizing: border-box; height: 20px; border-right: 1px solid #bdbdbd; border-bottom: 1px solid #9b9b9b; text-align: center; line-height: 19px; }
.corner svg { margin: 5px 0 0 10px; }
.ch.cur { background: #d2d2d2; color: #217346; border-bottom: 2px solid #217346; }
.gr { height: 20px; }
.rh { background: #e6e6e6; border-right: 1px solid #9b9b9b; border-bottom: 1px solid #bdbdbd; box-sizing: border-box; height: 20px; text-align: center; line-height: 21px; padding-left: 1px; }
.rh.cur { background: #d2d2d2; color: #217346; border-right: 2px solid #217346; }
.cell { position: relative; box-sizing: border-box; height: 20px; border-right: 1px solid #d4d4d4; border-bottom: 1px solid #d4d4d4; padding: 0 2px; line-height: 20px; white-space: nowrap; letter-spacing: -.25px; }
.cell span { position: relative; }
.cell.num, .cell.head { letter-spacing: 0; }
.num { text-align: right; }
.noline { border-bottom-color: transparent; }
.body { color: #548235; }
.head { color: #548235; font-weight: 700; }
.fill { background: var(--bg); border-color: var(--bg); box-shadow: -1px -1px 0 var(--bg), 0 -1px 0 var(--bg), -1px 0 0 var(--bg); }
.gline { border-bottom-color: #70ad47; }
.good { color: #006100; }
.bad { color: #9c0006; }
.bar { position: absolute; left: 1px; top: 1px; height: 16px; box-sizing: border-box; border: 1px solid #63c384; background: linear-gradient(90deg, #63c384, #e6f5ea); }
.arrow { position: absolute; left: 2px; top: 2px; }
.arrow.down { transform: rotate(180deg); }
.flt { position: absolute; right: 0; top: 1px; width: 15px; height: 15px; border: 1px solid #a6abb5; background: linear-gradient(#fff, #eef0f4); display: flex; align-items: center; justify-content: center; }
.flt .tri { border-width: 4px; border-bottom: 0; }
.handle { position: absolute; right: 0; bottom: 0; width: 2px; height: 2px; border-right: 2px solid #3f51b5; border-bottom: 2px solid #3f51b5; }
.cursor { position: absolute; z-index: 1; left: -2px; top: -2px; width: 135px; height: 19px; border: 2px solid #217346; }
.chart { position: absolute; left: 764px; top: 92px; z-index: 2; }
.vscroll { width: 21px; box-sizing: border-box; border-left: 1px solid #9b9b9b; padding-left: 2px; background: #e6e6e6; }
.sbtn { width: 13px; height: 13px; border: 1px solid #999; background: #fff; display: flex; align-items: center; justify-content: center; }
.vscroll .sbtn:first-child { margin-top: 2px; }
.vthumb { width: 13px; height: 413px; border: 1px solid #999; border-top: 0; background: #fff; }
.vspace { height: 22px; }

.stabs { height: 28px; box-sizing: border-box; border-top: 1px solid #9b9b9b; display: flex; align-items: flex-start; font-size: 13px; line-height: 24px; color: #444; letter-spacing: -.35px; }
.nav { width: 100px; display: flex; gap: 24px; padding: 9px 0 0 26px; box-sizing: border-box; }
.tsep { width: 1px; height: 20px; background: #9b9b9b; margin-top: 3px; }
.s4, .sd, .s1, .act { text-align: center; }
.s4 { width: 64px; }
.act { width: 64px; height: 23px; background: #fff; border: 1px solid #9b9b9b; border-top: 0; border-bottom: 2px solid #217346; color: #217346; letter-spacing: -.7px; }
.sd { width: 50px; }
.s1 { width: 63px; }
.plus { margin: 5px 0 0 32px; }
.hdots { margin: 9px 14px 0 auto; }
.hscroll { display: flex; margin: 6px 21px 0 0; }
.hb { width: 13px; height: 13px; border: 1px solid #999; background: #fff; display: flex; align-items: center; justify-content: center; }
.ht { width: 451px; height: 13px; border: 1px solid #999; background: #fff; }
.hs { width: 26px; background: #f0f0f0; }

.status { height: 22px; box-sizing: border-box; border-top: 1px solid #c6c6c6; background: #f3f3f3; display: flex; align-items: center; font-size: 11px; padding-bottom: 1px; }
.ready { margin-left: 8px; width: 48px; letter-spacing: -.1px; }
.acc { margin-right: 3px; }
.status b { letter-spacing: -.42px; }
.views { display: flex; margin-left: auto; }
.views div { width: 40px; height: 21px; display: flex; align-items: center; justify-content: center; }
.von { background: #c6c6c6; }
.zoom { margin-left: 6px; overflow: visible; }
.pc { width: 35px; margin-left: 15px; letter-spacing: -.3px; }

.task { height: 48px; box-sizing: border-box; border-top: 1px solid #b5bcc0; display: flex; align-items: center; background: linear-gradient(90deg, #def3fb 0, #d9eff8 260px, #eceff5 345px, #eef2f6 420px, #dff4fb 560px, #e0f4fb 930px, #eff3f6 1050px, #f2f2f3 1366px); font-size: 12px; letter-spacing: 0; color: #222; }
.widget { width: 336px; display: flex; padding-left: 19px; box-sizing: border-box; }
.widget div { display: flex; flex-direction: column; margin-left: 5px; margin-top: -2px; font-size: 11.5px; }
.dim { color: #5f666a; }
.search { width: 216px; height: 31px; box-sizing: border-box; margin: -1px 4px 0 13px; border: 1px solid #d5dbe0; border-radius: 16px; background: #fbfcfd; display: flex; align-items: center; padding-left: 10px; color: #5a5a5a; }
.search span { margin-left: 9px; width: 129px; font-size: 13px; }
.apps { display: grid; grid-template-columns: repeat(9, 44px); place-items: center; height: 47px; }
.xl { position: relative; width: 37px; height: 38px; border-radius: 4px; background: #f6fbfd; display: grid; place-items: center; box-shadow: 0 0 1px #b8c8d0; }
.xl i { position: absolute; bottom: 0; left: 11px; width: 16px; height: 3px; border-radius: 2px; background: #0067c0; }
.cr { position: relative; width: 24px; height: 38px; }
.cr svg { margin-top: 1px; }
.cr em { position: absolute; left: 12px; top: 2px; width: 16px; height: 16px; border-radius: 8px; background: #0c82c8; color: #fff; font: 10px/15px "Open Sans", sans-serif; text-align: center; }
.cr i { position: absolute; left: 9px; bottom: 0; width: 6px; height: 3px; border-radius: 2px; background: #868b8e; }
.tray { display: grid; grid-template-columns: 28px 36px 40px 34px 16px 79px 30px 44px; place-items: center; margin-left: 61px; }
.lang, .clock { display: flex; flex-direction: column; text-align: center; font-size: 11.5px; margin-top: -1px; }
.clock { text-align: right; justify-self: end; font-size: 11.8px; }
</style>
